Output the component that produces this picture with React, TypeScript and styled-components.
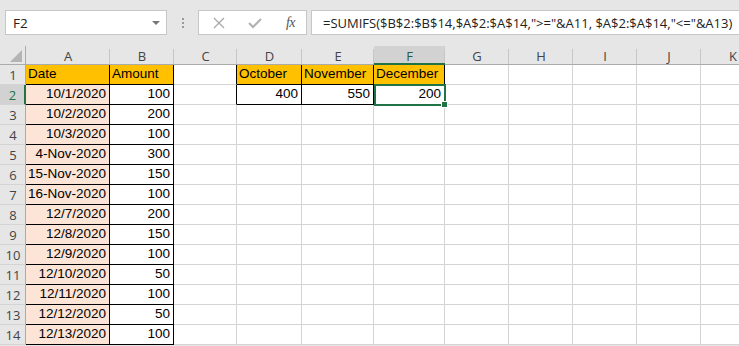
import React from "react";
import styled, { createGlobalStyle } from "styled-components";

const Global = createGlobalStyle`
  html, body { margin: 0; padding: 0; background: #e6e6e6; overflow: hidden; }
  body { width: 739px; height: 346px; }
`;

const Page = styled.div`
  width: 739px;
  height: 346px;
  background: #e6e6e6;
  display: flex;
  flex-direction: column;
  overflow: hidden;
`;

const FormulaBar = styled.div`
  height: 46px;
  box-sizing: border-box;
  padding: 10px 0 0 5px;
  display: flex;
  align-items: flex-start;
  font-family: "Open Sans", "Liberation Sans", sans-serif;
`;

const NameBox = styled.div`
  width: 162px;
  height: 25px;
  box-sizing: border-box;
  background: #fff;
  border: 1px solid #c6c6c6;
  display: flex;
  align-items: center;
  justify-content: space-between;
  padding: 0 6px 0 7px;
  font-size: 13.5px;
  color: #222;
`;

const Caret = styled.div`
  width: 0;
  height: 0;
  border-left: 4px solid transparent;
  border-right: 4px solid transparent;
  border-top: 4px solid #777;
`;

const Grip = styled.div`
  width: 31px;
  height: 25px;
  display: flex;
  flex-direction: column;
  align-items: center;
  justify-content: center;
  gap: 2px;
  & > span {
    width: 2px;
    height: 2px;
    background: #9a9a9a;
  }
`;

const FnBox = styled.div`
  width: 109px;
  height: 25px;
  box-sizing: border-box;
  background: #fff;
  border: 1px solid #c6c6c6;
  display: flex;
  align-items: center;
  justify-content: space-between;
  padding: 0 11px 0 14px;
  margin-right: 4px;
`;

const Fx = styled.span`
  font-family: "Liberation Serif", serif;
  font-style: italic;
  font-size: 14px;
  color: #555;
  letter-spacing: -0.5px;
`;

const FormulaInput = styled.div`
  flex: 1;
  height: 25px;
  box-sizing: border-box;
  background: #fff;
  border: 1px solid #c6c6c6;
  border-right: none;
  display: flex;
  align-items: center;
  padding-left: 11px;
  font-size: 13px;
  color: #222;
  white-space: nowrap;
  overflow: hidden;
`;

const Grid = styled.div`
  display: grid;
  grid-template-columns: 26px 84px 64px 63px 65px 72px 71px 64px 64px 64px 64px 64px 1fr;
  grid-template-rows: 19px repeat(14, 20px);
  background: #fff;
  position: relative;
`;

const Corner = styled.div`
  background: #e6e6e6;
  border-right: 1px solid #ababab;
  border-bottom: 1px solid #ababab;
  box-sizing: border-box;
  position: relative;
  &::after {
    content: "";
    position: absolute;
    right: 3px;
    bottom: 2px;
    width: 0;
    height: 0;
    border-left: 12px solid transparent;
    border-bottom: 12px solid #b4b4b4;
  }
`;

const ColHead = styled.div<{ $sel?: boolean; $last?: boolean }>`
  box-sizing: border-box;
  background: ${(p) => (p.$sel ? "#d2d2d2" : "#e6e6e6")};
  border-bottom: ${(p) => (p.$sel ? "2px solid #217346" : "1px solid #ababab")};
  position: relative;
  display: flex;
  align-items: center;
  justify-content: center;
  font-family: "Open Sans", "Liberation Sans", sans-serif;
  font-size: 13px;
  color: ${(p) => (p.$sel ? "#2b5a3f" : "#444")};
  padding-top: 2px;
  &::after {
    content: "";
    position: absolute;
    right: 0;
    top: 3px;
    bottom: 0;
    width: 1px;
    background: ${(p) => (p.$last ? "transparent" : "#c6c6c6")};
  }
`;

const RowHead = styled.div<{ $sel?: boolean }>`
  box-sizing: border-box;
  background: ${(p) => (p.$sel ? "#d2d2d2" : "#e6e6e6")};
  border-right: ${(p) => (p.$sel ? "2px solid #217346" : "1px solid #ababab")};
  border-bottom: 1px solid #d4d4d4;
  display: flex;
  align-items: center;
  justify-content: center;
  font-family: "Open Sans", "Liberation Sans", sans-serif;
  font-size: 13px;
  color: ${(p) => (p.$sel ? "#217346" : "#444")};
  padding-left: 1px;
`;

const Cell = styled.div<{ $bg?: string; $r?: boolean; $b?: boolean; $align?: string }>`
  box-sizing: border-box;
  background: ${(p) => p.$bg || "#fff"};
  border-right: 1px solid ${(p) => (p.$r ? "#000" : "#d4d4d4")};
  border-bottom: 1px solid ${(p) => (p.$b ? "#000" : "#d4d4d4")};
  display: flex;
  align-items: flex-end;
  justify-content: ${(p) => (p.$align === "left" ? "flex-start" : "flex-end")};
  padding: 0 3px 1px 2px;
  font-family: "Liberation Sans", Arial, sans-serif;
  font-size: 13.5px;
  line-height: 18px;
  color: #000;
  white-space: nowrap;
  overflow: visible;
`;

const Selection = styled.div`
  position: absolute;
  left: 374px;
  top: 38px;
  width: 72px;
  height: 22px;
  box-sizing: border-box;
  border: 2px solid #217346;
  pointer-events: none;
  &::after {
    content: "";
    position: absolute;
    right: -4px;
    bottom: -4px;
    width: 5px;
    height: 5px;
    background: #217346;
    border: 1px solid #fff;
  }
`;

const cols = ["A", "B", "C", "D", "E", "F", "G", "H", "I", "J", "K", ""];

const data: [string, string][] = [
  ["10/1/2020", "100"],
  ["10/2/2020", "200"],
  ["10/3/2020", "100"],
  ["4-Nov-2020", "300"],
  ["15-Nov-2020", "150"],
  ["16-Nov-2020", "100"],
  ["12/7/2020", "200"],
  ["12/8/2020", "150"],
  ["12/9/2020", "100"],
  ["12/10/2020", "50"],
  ["12/11/2020", "100"],
  ["12/12/2020", "50"],
  ["12/13/2020", "100"],
];

const ORANGE = "#ffc000";
const PEACH = "#fce4d6";

type CellDef = { text?: string; bg?: string; r?: boolean; b?: boolean; align?: string };

function buildRow(i: number): CellDef[] {
  const row: CellDef[] = [];
  if (i === 1) {
    row.push({ text: "Date", bg: ORANGE, r: true, b: true, align: "left" });
    row.push({ text: "Amount", bg: ORANGE, r: true, b: true, align: "left" });
  } else {
    const [d, a] = data[i - 2];
    row.push({ text: d, bg: PEACH, r: true, b: true });
    row.push({ text: a, r: true, b: true });
  }
  const top = i <= 2;
  row.push({ r: top });
  if (i === 1) {
    row.push({ text: "October", bg: ORANGE, r: true, b: true, align: "left" });
    row.push({ text: "November", bg: ORANGE, r: true, b: true, align: "left" });
    row.push({ text: "December", bg: ORANGE, r: true, b: true, align: "left" });
  } else if (i === 2) {
    row.push({ text: "400", r: true, b: true });
    row.push({ text: "550", r: true, b: true });
    row.push({ text: "200", r: true, b: true });
  } else {
    row.push({}, {}, {});
  }
  for (let k = 0; k < 6; k++) row.push({});
  return row;
}

const XIcon = () => (
  <svg width="12" height="12" viewBox="0 0 12 12">
    <path d="M1 1 L11 11 M11 1 L1 11" stroke="#a8a8a8" strokeWidth="1.3" fill="none" />
  </svg>
);

const CheckIcon = () => (
  <svg width="14" height="12" viewBox="0 0 14 12">
    <path d="M1 6 L5 10 L13 2" stroke="#b0b0b0" strokeWidth="2" fill="none" />
  </svg>
);

export default function App() {
  const rows = Array.from({ length: 14 }, (_, k) => k + 1);
  return (
    <Page>
      <Global />
      <FormulaBar>
        <NameBox>
          <span>F2</span>
          <Caret />
        </NameBox>
        <Grip>
          <span />
          <span />
          <span />
        </Grip>
        <FnBox>
          <XIcon />
          <CheckIcon />
          <Fx>fx</Fx>
        </FnBox>
        <FormulaInput>
          =SUMIFS($B$2:$B$14,$A$2:$A$14,"&gt;="&amp;A11, $A$2:$A$14,"&lt;="&amp;A13)
        </FormulaInput>
      </FormulaBar>
      <Grid>
        <Corner />
        {cols.map((c, idx) => (
          <ColHead key={idx} $sel={c === "F"} $last={c === ""}>
            {c}
          </ColHead>
        ))}
        {rows.map((r) => (
          <React.Fragment key={r}>
            <RowHead $sel={r === 2}>{r}</RowHead>
            {buildRow(r).map((c, j) => (
              <Cell key={j} $bg={c.bg} $r={c.r} $b={c.b} $align={c.align}>
                {c.text}
              </Cell>
            ))}
          </React.Fragment>
        ))}
        <Selection />
      </Grid>
    </Page>
  );
}
